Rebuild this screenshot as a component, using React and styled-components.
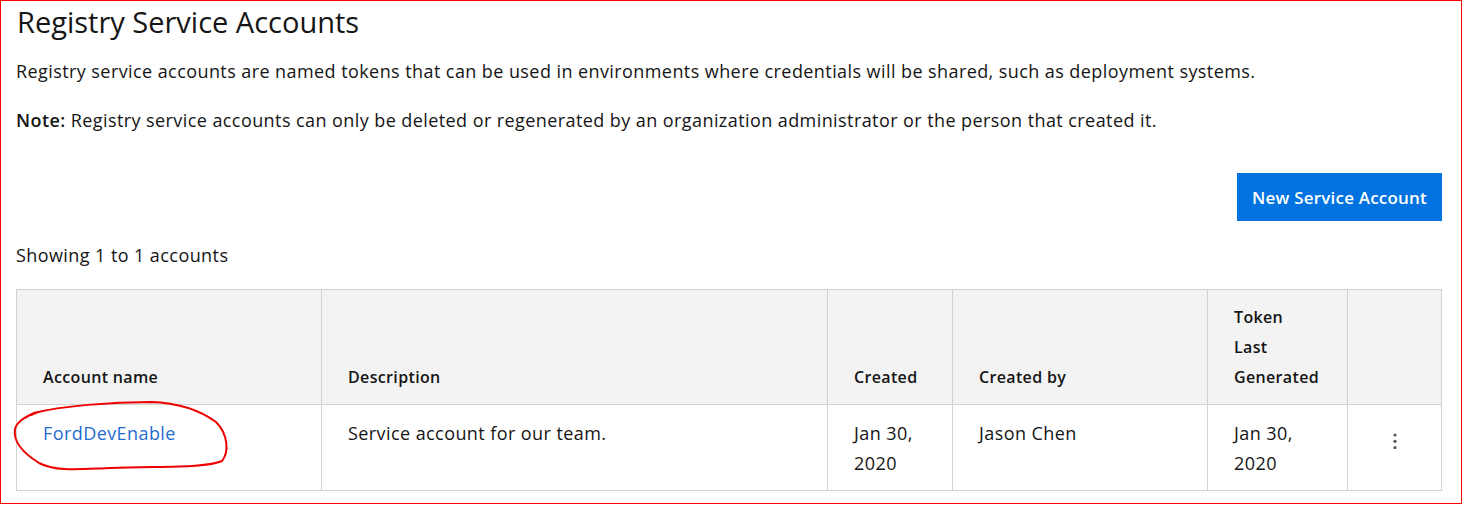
import React from "react";
import styled, { createGlobalStyle } from "styled-components";

const Global = createGlobalStyle`
  html, body { margin: 0; padding: 0; background: #fff; }
  body { font-family: "Open Sans", "Noto Sans", sans-serif; color: #151515; }
  * { box-sizing: border-box; }
`;

const Frame = styled.div`
  position: relative;
  width: 1462px;
  height: 504px;
  border: 1px solid #ff0000;
  padding: 0 20px 0 15px;
`;

const Title = styled.h1`
  margin: 0;
  padding-top: 3px;
  padding-left: 1px;
  font-family: "Open Sans", sans-serif;
  font-weight: 400;
  font-size: 29px;
  line-height: 36px;
  color: #151515;
`;

const Para = styled.p`
  margin: ${(p) => p.$mt}px 0 0;
  font-size: 18px;
  letter-spacing: 0.42px;
  line-height: 26px;
  color: #151515;
  b { font-weight: 600; }
`;

const Toolbar = styled.div`
  display: flex;
  justify-content: flex-end;
  margin-top: 40px;
  margin-right: -1px;
`;

const PrimaryButton = styled.button`
  height: 48px;
  width: 205px;
  border: none;
  border-radius: 0;
  background: #0073e0;
  color: #fff;
  font-family: "Open Sans", sans-serif;
  font-weight: 600;
  font-size: 17px;
  letter-spacing: 0.2px;
`;

const Count = styled.div`
  margin-top: 21px;
  font-size: 18px;
  letter-spacing: 0.42px;
  line-height: 26px;
`;

const Table = styled.table`
  margin-top: 21px;
  width: 1425px;
  border-collapse: collapse;
  table-layout: fixed;
  font-size: 18px;
  letter-spacing: 0.42px;
`;

const HeadCell = styled.th`
  background: #f3f3f3;
  border: 1px solid #d2d2d2;
  text-align: left;
  vertical-align: bottom;
  padding: 12px 20px 12px 26px;
  font-weight: 600;
  font-size: 16px;
  letter-spacing: 0.35px;
  line-height: 30px;
  height: 115px;
`;

const Cell = styled.td`
  border: 1px solid #d2d2d2;
  vertical-align: top;
  padding: ${(p) => (p.$center ? "13px 0 12px" : "13px 20px 12px 26px")};
  line-height: 30px;
  height: 86px;
  text-align: ${(p) => (p.$center ? "center" : "left")};
`;

const Link = styled.a`
  color: #1f6cd0;
  text-decoration: none;
`;

const Kebab = styled.button`
  border: none;
  background: transparent;
  padding: 0;
  margin-top: 15px;
  color: #55575a;
  display: inline-flex;
`;

const Annotation = styled.svg`
  position: absolute;
  left: 0;
  top: 0;
  pointer-events: none;
`;

const cols = [305, 506, 125, 255, 140, 94];

export default function App() {
  return (
    <>
      <Global />
      <Frame>
        <Title>Registry Service Accounts</Title>
        <Para $mt={18}>
          Registry service accounts are named tokens that can be used in environments where credentials will be shared, such as deployment systems.
        </Para>
        <Para $mt={23}>
          <b>Note:</b> Registry service accounts can only be deleted or regenerated by an organization administrator or the person that created it.
        </Para>
        <Toolbar>
          <PrimaryButton>New Service Account</PrimaryButton>
        </Toolbar>
        <Count>Showing 1 to 1 accounts</Count>
        <Table>
          <colgroup>
            {cols.map((w, i) => (
              <col key={i} style={{ width: w }} />
            ))}
          </colgroup>
          <thead>
            <tr>
              <HeadCell>Account name</HeadCell>
              <HeadCell>Description</HeadCell>
              <HeadCell>Created</HeadCell>
              <HeadCell>Created by</HeadCell>
              <HeadCell>
                Token
                <br />
                Last
                <br />
                Generated
              </HeadCell>
              <HeadCell />
            </tr>
          </thead>
          <tbody>
            <tr>
              <Cell>
                <Link href="#">FordDevEnable</Link>
              </Cell>
              <Cell>Service account for our team.</Cell>
              <Cell>Jan 30, 2020</Cell>
              <Cell>Jason Chen</Cell>
              <Cell>Jan 30, 2020</Cell>
              <Cell $center>
                <Kebab aria-label="Actions">
                  <svg width="4" height="16" viewBox="0 0 4 16" fill="currentColor">
                    <circle cx="2" cy="2" r="1.6" />
                    <circle cx="2" cy="8.3" r="1.6" />
                    <circle cx="2" cy="14.6" r="1.6" />
                  </svg>
                </Kebab>
              </Cell>
            </tr>
          </tbody>
        </Table>
        <Annotation width="1462" height="505" viewBox="0 0 1462 505">
          <path
            d="M37 411 L30 414 M33 412 C60 405 110 401 150 401 C180 402 200 410 215 421 C226 432 229 450 221 460 C205 467 160 465 110 467 C80 468 55 471 38 462 C22 452 12 440 14 428 C16 420 25 416 33 412"
            fill="none"
            stroke="#ee0000"
            strokeWidth="2"
            strokeLinecap="round"
          />
        </Annotation>
      </Frame>
    </>
  );
}
